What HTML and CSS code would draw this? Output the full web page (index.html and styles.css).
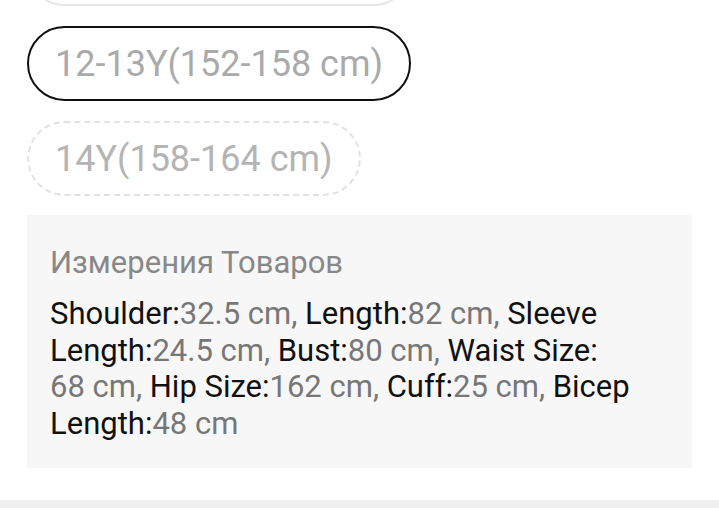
FILE: index.html
```html
<!DOCTYPE html>
<html lang="en">
<head>
    <meta charset="UTF-8">
    <meta name="viewport" content="width=device-width, initial-scale=1.0">
    <title>Size</title>
    <link rel="stylesheet" href="styles.css">
</head>
<body>
    <div class="sheet">
        <div class="sizes">
            <div class="size">11-12Y(146-152 cm)</div>
            <div class="size selected">12-13Y(152-158 cm)</div>
            <div class="size soldout">14Y(158-164 cm)</div>
        </div>

        <div class="measures">
            <div class="measures-title">Измерения Товаров</div>
            <p class="measures-text">
                Shoulder:<span>32.5 cm,</span> Length:<span>82 cm,</span> Sleeve Length:<span>24.5 cm,</span> Bust:<span>80 cm,</span> Waist Size:<br><span>68 cm,</span> Hip Size:<span>162 cm,</span> Cuff:<span>25 cm,</span> Bicep Length:<span>48 cm</span>
            </p>
        </div>
    </div>
    <div class="bottom-bar"></div>
</body>
</html>
```

FILE: styles.css
```css
body {
    margin: 0;
    font-family: Roboto, "Noto Sans", sans-serif;
    background: #fff;
    height: 508px;
    overflow: hidden;
    display: flex;
    flex-direction: column;
}

.sheet {
    flex: 1;
    padding: 0 27px;
}

.sizes {
    display: flex;
    flex-direction: column;
    align-items: flex-start;
    gap: 20px;
    margin-top: -69px;
}

.size {
    height: 71px;
    padding: 0 26px;
    border: 2px solid #e6e6e6;
    border-radius: 38px;
    display: flex;
    align-items: center;
    font-size: 36px;
    color: #aaa;
    white-space: nowrap;
}

.size.selected {
    border-color: #111;
}

.size.soldout {
    border: 2px dashed #e2e2e2;
    color: #b4b4b4;
}

.measures {
    margin-top: 19px;
    background: #f7f7f7;
    padding: 31px 20px 26px 23px;
}

.measures-title {
    font-size: 31px;
    color: #888;
    line-height: 34px;
}

.measures-text {
    margin: 16px 0 0;
    font-size: 31px;
    line-height: 36.5px;
    color: #111;
}

.measures-text span {
    color: #777;
}

.bottom-bar {
    height: 8px;
    background: #f0f0f0;
}
```
